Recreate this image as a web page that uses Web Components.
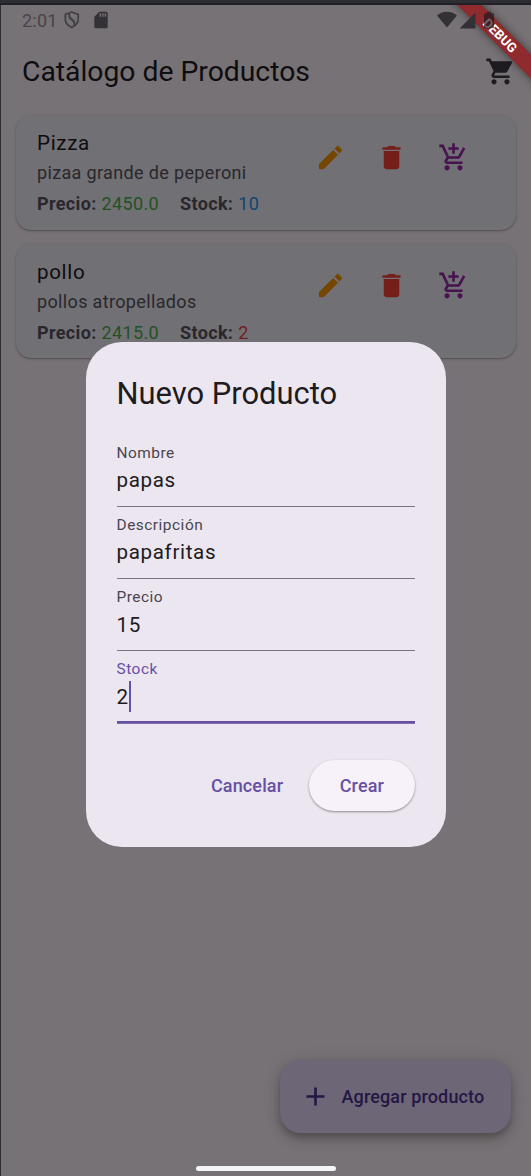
<!DOCTYPE html>
<html lang="es">
<head>
<meta charset="utf-8">
<title>Catálogo de Productos</title>
<style>
html,body{margin:0;height:100%;background:#2c2d32}
body{font-family:Roboto,"Liberation Sans",sans-serif;overflow:hidden}
</style>
</head>
<body>
<catalog-app></catalog-app>
<script>
const icons={
 pencil:'<path d="M3 17.46v3.04c0 .28.22.5.5.5h3.04c.13 0 .26-.05.35-.15L17.81 9.94l-3.75-3.75L3.15 17.1c-.1.1-.15.22-.15.36zM20.71 7.04a.996.996 0 0 0 0-1.41l-2.34-2.34a.996.996 0 0 0-1.41 0l-1.83 1.83 3.75 3.75 1.83-1.83z"/>',
 trash:'<path d="M6 19c0 1.1.9 2 2 2h8c1.100 0 2-.9 2-2V7H6v12zM19 4h-3.500l-1-1h-5l-1 1H5v2h14V4z"/>',
 addcart:'<path d="M11 9h2V6h3V4h-3V1h-2v3H8v2h3v3zm-4 9c-1.100 0-1.990.9-1.990 2S5.900 22 7 22s2-.9 2-2-.9-2-2-2zm10 0c-1.100 0-1.990.9-1.990 2s.89 2 1.990 2 2-.9 2-2-.9-2-2-2zm-8.900-5h7.450c.75 0 1.410-.41 1.750-1.030L21.160 4.960 19.420 4l-3.870 7H8.530L4.270 2H1v2h2l3.600 7.590-1.350 2.440C4.520 15.370 5.480 17 7 17h12v-2H7l1.100-2z"/>',
 cart:'<path d="M7 18c-1.100 0-1.990.9-1.990 2S5.900 22 7 22s2-.9 2-2-.9-2-2-2zM1 2v2h2l3.600 7.590-1.350 2.450c-.16.28-.25.61-.25.96 0 1.100.9 2 2 2h12v-2H7.420c-.14 0-.25-.11-.25-.25l.03-.12.9-1.630h7.450c.75 0 1.410-.41 1.750-1.030l3.580-6.490A1 1 0 0 0 20 4H5.210l-.94-2H1zm16 16c-1.100 0-1.990.9-1.990 2s.89 2 1.990 2 2-.9 2-2-.9-2-2-2z"/>',
 plus:'<path d="M19 13h-6v6h-2v-6H5v-2h6V5h2v6h6z"/>',
 shield:'<path fill-rule="evenodd" d="M12 1.500 3 4.500v7c0 5 3.600 9 9 11.200 5.400-2.200 9-6.200 9-11.200v-7zM5.200 6.100 8 5.200c-.8 3.300.3 5.600 3.400 7.800 2.600 1.900 3.300 3.700 2.400 6.200L12 20.200c-4.200-1.900-6.800-4.900-6.800-8.700zM10.300 4.400 12 3.800l6.800 2.300v5.400c0 2.200-.8 4-2.300 5.600.1-2.600-1-4.600-3.600-6.500-2.500-1.800-3.300-3.500-2.600-6.200z"/>',
 sd:'<path fill-rule="evenodd" d="M18 2h-8L4 8v12c0 1.100.9 2 2 2h12c1.100 0 2-.9 2-2V4c0-1.100-.9-2-2-2zm-6 6h-1.600V4H12zm3 0h-1.600V4H15zm3 0h-1.600V4H18z"/>',
 wifi:'<path d="M12 21 0 6.500C3 3.800 7.200 2 12 2s9 1.800 12 4.500z"/>',
 signal:'<path d="M2 22h20V2z"/>',
 battery:'<path d="M16.700 4H14.500V2h-5v2H7.300C6.600 4 6 4.600 6 5.300v15.300C6 21.400 6.600 22 7.300 22h9.300c.8 0 1.400-.6 1.400-1.400V5.300c0-.7-.6-1.300-1.300-1.300z"/>'
};
function define(name,html,setup){
 customElements.define(name,class extends HTMLElement{
  constructor(){super();const t=document.createElement('template');t.innerHTML=html;
   this.attachShadow({mode:'open'}).append(t.content.cloneNode(true));}
  connectedCallback(){if(setup)setup(this,this.shadowRoot);}
 });
}
define('md-icon',`<style>:host{display:block;flex:none;width:31px;height:31px}svg{display:block;width:100%;height:100%;fill:currentColor}</style><svg viewBox="0 0 24 24"></svg>`,
 (h,r)=>{r.querySelector('svg').innerHTML=icons[h.getAttribute('name')];});

define('status-bar',`<style>
:host{display:flex;align-items:center;height:30px;padding:0 34px 0 21px;box-sizing:border-box;color:#343136;position:relative;z-index:3}
span{font-size:18px;letter-spacing:.2px;color:#48454a;width:40px}
.sh{width:19.500px;height:19.500px;color:#434045}.sd{width:20px;height:20px;margin-left:9px}
.gap{flex:1}.wf{width:20px;height:20px}.sg{width:19px;height:19px;margin-left:1px}.bt{width:20px;height:20px;margin-left:2px;margin-right:-2px;color:rgba(29,20,24,.66)}
</style><span>2:01</span><md-icon class="sh" name="shield"></md-icon><md-icon class="sd" name="sd"></md-icon><div class="gap"></div><md-icon class="wf" name="wifi"></md-icon><md-icon class="sg" name="signal"></md-icon><md-icon class="bt" name="battery"></md-icon>`);

define('app-bar',`<style>
:host{display:flex;align-items:center;justify-content:space-between;height:73px;padding:0 15.500px 0 21px;box-sizing:border-box;color:#1d1b20}
h1{margin:0;font-size:28.300px;font-weight:400;line-height:36px;color:#0e0d10}
</style><h1><slot></slot></h1><md-icon name="cart"></md-icon>`);

define('debug-banner',`<style>
:host{position:absolute;right:0;top:0;width:100px;height:100px;overflow:hidden;z-index:2;pointer-events:none}
div{position:absolute;width:160px;height:17px;left:-11px;top:21.500px;transform:rotate(45deg);background:#8f2a2e;box-shadow:0 0 8px rgba(0,0,0,.5);color:#fff;font-size:13.100px;font-weight:700;line-height:17px;text-align:center;box-sizing:border-box}
</style><div>DEBUG</div>`);

define('product-card',`<style>
:host{display:flex;box-sizing:border-box;height:114.500px;padding:13px 47px 0 21px;border-radius:15.500px;background:#717075;box-shadow:0 1px 3px rgba(0,0,0,.2),0 1px 1px rgba(0,0,0,.16)}
.text{flex:1;white-space:nowrap}
.t{font-size:20.600px;line-height:31px;letter-spacing:.64px;color:#0e0d10}
.d,.p{font-size:18px;letter-spacing:.35px;line-height:26px;color:#29272c}
.d{margin-top:1px}.p{margin-top:5px;display:flex}
b{font-weight:700;margin-right:5px}.price{color:#235225;margin-right:21px}
.stock{color:#0f4571}:host([low]) .stock{color:#70211c}
.actions{display:flex;gap:30.500px;padding-top:13.500px}
</style><div class="text"><div class="t"></div><div class="d"></div><div class="p"><b>Precio:</b><span class="price"></span><b>Stock:</b><span class="stock"></span></div></div>
<div class="actions"><md-icon name="pencil" style="color:#754600"></md-icon><md-icon name="trash" style="color:#741f19"></md-icon><md-icon name="addcart" style="color:#47124f"></md-icon></div>`,
 (h,r)=>{for(const [c,a] of [['.t','name'],['.d','description'],['.price','price'],['.stock','stock']])r.querySelector(c).textContent=h.getAttribute(a);});

define('add-button',`<style>
:host{position:absolute;right:20.500px;bottom:43.500px;display:flex;align-items:center;gap:10.500px;box-sizing:border-box;width:231px;height:72.500px;padding-left:20.500px;border-radius:20.600px;background:#6c6676;color:#241645;font-size:18px;font-weight:500;letter-spacing:.13px;white-space:nowrap;box-shadow:0 4px 5px rgba(0,0,0,.14),0 7px 13px rgba(0,0,0,.16),0 1px 18px rgba(0,0,0,.1)}
</style><md-icon name="plus"></md-icon><slot></slot>`);

define('text-field',`<style>
:host{display:block;box-sizing:border-box;height:72.200px;padding-top:7.500px;background:linear-gradient(#79747e,#79747e) 0 100%/100% 1.300px no-repeat}
label{display:block;height:20px;line-height:20px;font-size:15.430px;letter-spacing:.51px;color:#49454f}
.v{display:flex;align-items:center;height:31px;margin-top:2.200px;font-size:20.600px;letter-spacing:.64px;color:#1d1b20}
:host([focused]){background:linear-gradient(#6750a4,#6750a4) 0 100%/100% 2.800px no-repeat}
:host([focused]) label{color:#6750a4}
:host([focused]) .v::after{content:"";width:2.600px;height:31px;background:#6750a4}
</style><label></label><div class="v"></div>`,
 (h,r)=>{r.querySelector('label').textContent=h.getAttribute('label');r.querySelector('.v').textContent=h.getAttribute('value');});

define('pill-button',`<style>
:host{display:flex;align-items:center;justify-content:center;height:51.500px;padding:0 15.500px;color:#6750a4;font-size:18px;font-weight:500;letter-spacing:.13px;border-radius:26px}
:host([raised]){padding:0 31px;background:#f7f2fa;box-shadow:0 1px 2px rgba(0,0,0,.3),0 1px 3px rgba(0,0,0,.12)}
</style><slot></slot>`);

define('product-dialog',`<style>
:host{position:absolute;z-index:5;left:84.500px;top:337px;width:360.500px;height:505px;padding:31px 31px 0;box-sizing:border-box;border-radius:36px;background:#ece6f0}
h2{margin:0 0 21.100px;font-size:30.900px;font-weight:400;line-height:41px;color:#1d1b20}
.actions{display:flex;justify-content:flex-end;gap:10px;margin-top:36px}
</style><h2>Nuevo Producto</h2>
<text-field label="Nombre" value="papas"></text-field><text-field label="Descripción" value="papafritas"></text-field><text-field label="Precio" value="15"></text-field><text-field label="Stock" value="2" focused></text-field>
<div class="actions"><pill-button>Cancelar</pill-button><pill-button raised>Crear</pill-button></div>`);

define('catalog-app',`<style>
:host{display:block;box-sizing:border-box;width:531px;height:1176px;padding:4px 0 0 1px;background:linear-gradient(#2d2e33 3px,#202126 3px,#202126 5px,#2d2e33 5px)}
.screen{position:relative;height:100%;overflow:hidden;background:#777275;border-top:1px solid #202126;box-sizing:border-box}
.list{display:grid;gap:14.400px;padding:7px 15.500px 0 15px}
.home{position:absolute;z-index:6;left:195px;bottom:5px;width:140px;height:5px;border-radius:3px;background:#f5f4f6}
</style><div class="screen"><status-bar></status-bar><debug-banner></debug-banner><app-bar>Catálogo de Productos</app-bar>
<div class="list"><product-card name="Pizza" description="pizaa grande de peperoni" price="2450.0" stock="10"></product-card><product-card low name="pollo" description="pollos atropellados" price="2415.0" stock="2"></product-card></div>
<add-button>Agregar producto</add-button><product-dialog></product-dialog><div class="home"></div></div>`);
</script>
</body>
</html>
